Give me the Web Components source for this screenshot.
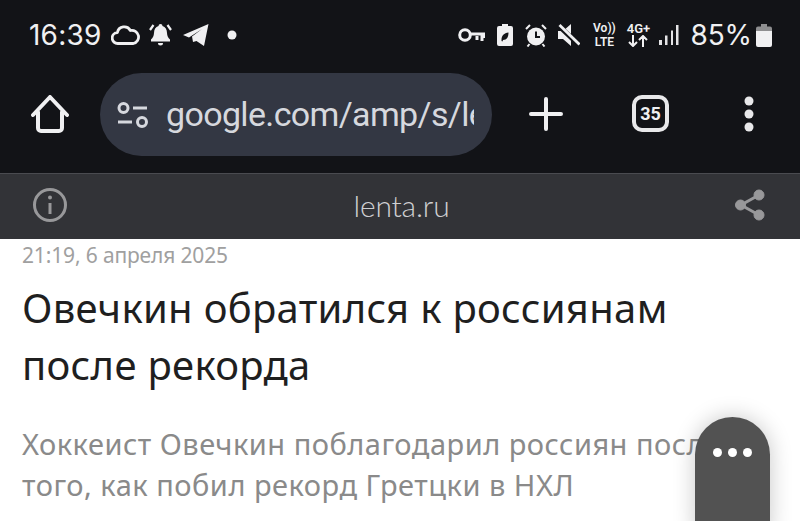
<!DOCTYPE html>
<html lang="ru">
<head>
<meta charset="utf-8">
<title>lenta.ru</title>
<style>
  html, body { margin: 0; height: 521px; overflow: hidden; background: #fff; }
</style>
</head>
<body>
<phone-page>
  <status-bar time="16:39" battery="85%"></status-bar>
  <browser-toolbar url="google.com/amp/s/lenta.ru" tabs="35"></browser-toolbar>
  <site-bar host="lenta.ru"></site-bar>
  <news-article date="21:19, 6 апреля 2025">
    <span slot="title">Овечкин обратился к россиянам после рекорда</span>
    <span slot="lead">Хоккеист Овечкин поблагодарил россиян после того, как побил рекорд Гретцки в НХЛ</span>
  </news-article>
  <more-button></more-button>
</phone-page>

<script>
class PhonePage extends HTMLElement {
  constructor() {
    super();
    this.attachShadow({ mode: "open" });
    this.shadowRoot.innerHTML = `
    <style>
      :host {
        display: flex;
        flex-direction: column;
        position: relative;
        width: 800px;
        height: 521px;
        overflow: hidden;
      }
    </style>
    <slot></slot>
  `;
  }
}

class StatusBar extends HTMLElement {
  constructor() {
    super();
    this.attachShadow({ mode: "open" });
  }

  connectedCallback() {
    const time = this.getAttribute("time");
    const battery = this.getAttribute("battery");
    this.shadowRoot.innerHTML = `
    <style>
      :host {
        display: flex;
        align-items: center;
        box-sizing: border-box;
        height: 70px;
        padding: 0 28px 0 29px;
        background: #121317;
        color: #f0f0f2;
        font: 28px Inter, Roboto, sans-serif;
      }
      .left, .right { display: flex; align-items: center; }
      .left { gap: 9px; }
      .right { margin-left: auto; gap: 12px; }
      svg { display: block; flex: none; }
      .time { letter-spacing: 0.2px; margin-right: 1px; }
      .pct { letter-spacing: -0.1px; margin: 0 -8px 0 -1px; }
      .net {
        display: flex;
        flex-direction: column;
        align-items: center;
        font: 600 12px/14px Roboto, sans-serif;
        width: 24px;
      }
      .net.data { font-size: 13px; line-height: 12px; }
      .net + .net { margin-left: -2px; }
      .net + svg { margin-left: -3px; }
    </style>
    <div class="left">
      <span class="time">${time}</span>
      <svg width="29" height="22" viewBox="0 0 29 22" fill="none" stroke="#f0f0f2" stroke-width="2.8" stroke-linejoin="round"><path d="M7 19.500a5.500 5.500 0 0 1-.6-11 7 7 0 0 1 13-2 6.500 6.500 0 0 1 3 13z"/></svg>
      <svg width="25" height="24" viewBox="0 0 25 24" fill="#f0f0f2" style="margin-left:-1px"><path d="M12.500 1a2 2 0 0 1 2 2c3 1 4.400 3.500 4.500 7 .1 3 1.200 5 3 6.500v2H3v-2c1.800-1.500 2.900-3.500 3-6.500.1-3.500 1.500-6 4.500-7a2 2 0 0 1 2-2zM10 20h5a2.500 2.500 0 0 1-5 0z"/><path d="M5.500 2 2 7M19.500 2 23 7" stroke="#f0f0f2" stroke-width="2.200" fill="none"/></svg>
      <svg width="27" height="24" viewBox="0 0 27 24" fill="#f0f0f2"><path d="M1 12 26.500 1 22 23l-7.500-5-3.500 1-1-5.500L20 6 7 14.500z"/></svg>
      <svg width="10" height="10" viewBox="0 0 10 10" fill="#f0f0f2" style="margin-left:9px"><circle cx="5" cy="5" r="4.500"/></svg>
    </div>
    <div class="right">
      <svg width="27" height="15" viewBox="0 0 27 15" fill="none" stroke="#f0f0f2" stroke-width="3"><circle cx="7" cy="7" r="5.300"/><path d="M12 6h15v2.500h-3v4.500M19 8v4" /></svg>
      <svg width="16" height="22" viewBox="0 0 16 22"><path fill="#f0f0f2" d="M5 0h6v2h3a2 2 0 0 1 2 2v16a2 2 0 0 1-2 2H2a2 2 0 0 1-2-2V4a2 2 0 0 1 2-2h3z"/><path fill="#121317" d="M4.500 16c0-4.500 2.500-7 7-7.500 0 4.500-1.500 7.500-5.500 7.500l-.5 1.500-1-.500z"/></svg>
      <svg width="22" height="23" viewBox="0 0 22 23"><circle cx="11" cy="12.500" r="9" fill="#f0f0f2"/><path d="M11 7.500v5.500h4" stroke="#121317" stroke-width="2" fill="none"/><path d="M1 5l4-4M21 5l-4-4M4.500 20l-2 2.500M17.500 20l2 2.500" stroke="#f0f0f2" stroke-width="2" fill="none"/></svg>
      <svg width="22" height="22" viewBox="0 0 22 22" style="margin-left:-1px"><path fill="#f0f0f2" d="M0 7h5l8-7v22l-8-7H0z"/><path d="M1 2l20 19" stroke="#121317" stroke-width="5"/><path d="M1.500 1l20 19.500" stroke="#f0f0f2" stroke-width="2.800"/></svg>
      <div class="net"><span>Vo))</span><span>LTE</span></div>
      <div class="net data"><span>4G+</span>
        <svg width="20" height="12" viewBox="0 0 20 12" fill="none" stroke="#f0f0f2" stroke-width="2"><path d="M5 0v11M1 7l4 4 4-4M15 12V1M11 5l4-4 4 4"/></svg>
      </div>
      <svg width="20" height="20" viewBox="0 0 20 20" fill="#e4e4e6"><rect x="0" y="15" width="3" height="5"/><rect x="6" y="10.500" width="2.500" height="9.500"/><rect x="12" y="5.500" width="2" height="14.500"/><rect x="17" y="0" width="2.500" height="20"/></svg>
      <span class="pct">${battery}</span>
      <svg width="16" height="23" viewBox="0 0 16 23"><path fill="#8e8e90" d="M5 0h6v3H5z"/><path fill="#8e8e90" d="M2 2.500h12a2 2 0 0 1 2 2V8H0V4.500a2 2 0 0 1 2-2z"/><path fill="#f0f0f2" d="M0 7h16v14a2 2 0 0 1-2 2H2a2 2 0 0 1-2-2z"/></svg>
    </div>
  `;
  }
}

class BrowserToolbar extends HTMLElement {
  constructor() {
    super();
    this.attachShadow({ mode: "open" });
  }

  connectedCallback() {
    const url = this.getAttribute("url");
    const tabs = this.getAttribute("tabs");
    this.shadowRoot.innerHTML = `
    <style>
      :host {
        display: flex;
        align-items: flex-start;
        box-sizing: border-box;
        height: 103px;
        padding: 3px 0 0 31px;
        background: #121317;
        color: #f0f0f2;
      }
      svg { display: block; flex: none; }
      .home { margin: 22px 31px 0 0; }
      .pill {
        display: flex;
        align-items: center;
        box-sizing: border-box;
        width: 392px;
        height: 83px;
        padding: 0 17px;
        border-radius: 42px;
        background: #333743;
        color: #d6d8de;
      }
      .url {
        margin: -2px 0 0 17px;
        width: 308px;
        overflow: hidden;
        white-space: nowrap;
        font: 34px Roboto, sans-serif;
        letter-spacing: -0.65px;
      }
      .actions { display: flex; align-items: center; margin-left: 37px; padding-top: 22px; }
      .tabs {
        display: flex;
        align-items: center;
        justify-content: center;
        box-sizing: border-box;
        width: 37px;
        height: 37px;
        margin-left: 69px;
        border: 4px solid #e8e8ea;
        border-radius: 10px;
        font: 700 18px Roboto, sans-serif;
      }
      .dots { margin-left: 75px; }
    </style>
    <svg class="home" width="38" height="38" viewBox="0 0 38 38" fill="none" stroke="#f0f0f2" stroke-width="4" stroke-linejoin="round" stroke-linecap="round"><path d="M2 20 19 2l17 18M7 17v16a3 3 0 0 0 3 3h18a3 3 0 0 0 3-3V17"/></svg>
    <div class="pill">
      <svg width="32" height="26" viewBox="0 0 32 26" fill="none" stroke="#d6d8de" stroke-width="3"><circle cx="6.500" cy="6" r="4.500"/><circle cx="25" cy="20" r="4.500"/><path d="M16 6h14M1 20h14"/></svg>
      <div class="url">${url}</div>
    </div>
    <div class="actions">
      <svg width="34" height="34" viewBox="0 0 34 34" stroke="#f0f0f2" stroke-width="4" stroke-linecap="round"><path d="M17 2v30M2 17h30"/></svg>
      <div class="tabs">${tabs}</div>
      <svg class="dots" width="10" height="36" viewBox="0 0 10 36" fill="#e8e8ea"><circle cx="5" cy="5" r="4.500"/><circle cx="5" cy="18" r="4.500"/><circle cx="5" cy="31" r="4.500"/></svg>
    </div>
  `;
  }
}

class SiteBar extends HTMLElement {
  constructor() {
    super();
    this.attachShadow({ mode: "open" });
  }

  connectedCallback() {
    this.shadowRoot.innerHTML = `
    <style>
      :host {
        display: flex;
        align-items: center;
        justify-content: space-between;
        box-sizing: border-box;
        height: 66px;
        padding: 0 35px 4px 32px;
        background: #323337;
        border-top: 1px solid #4a4b50;
        color: #cfcfd1;
      }
      svg { display: block; flex: none; }
      .host {
        font: 300 30px Lato, "Noto Sans", sans-serif;
        letter-spacing: -0.2px;
      }
    </style>
    <svg width="36" height="36" viewBox="0 0 36 36" fill="none" stroke="#98989a" stroke-width="3"><circle cx="18" cy="18" r="15.500"/><path d="M18 16v11" stroke-width="3"/><circle cx="18" cy="10.500" r="2" fill="#98989a" stroke="none"/></svg>
    <span class="host">${this.getAttribute("host")}</span>
    <svg width="30" height="32" viewBox="0 0 30 32" fill="#98989a" stroke="#98989a"><path d="M24 6 6 16l18 10" fill="none" stroke-width="3"/><circle cx="24" cy="6" r="5"/><circle cx="5.500" cy="16" r="5"/><circle cx="24" cy="26" r="5"/></svg>
  `;
  }
}

class NewsArticle extends HTMLElement {
  constructor() {
    super();
    this.attachShadow({ mode: "open" });
  }

  connectedCallback() {
    this.shadowRoot.innerHTML = `
    <style>
      :host {
        display: block;
        box-sizing: border-box;
        padding: 4px 0 0 22px;
        background: #fff;
        font-family: "Noto Sans", sans-serif;
      }
      .date { font-size: 21px; line-height: 24px; color: #a0a0a0; letter-spacing: -0.15px; }
      .title { margin-top: 12px; width: 700px; font-size: 40px; line-height: 57px; color: #1f1f1f; letter-spacing: 0.3px; }
      .lead { margin-top: 30px; width: 740px; font-size: 29px; line-height: 41px; color: #8a8a8a; letter-spacing: 0.5px; }
    </style>
    <div class="date">${this.getAttribute("date")}</div>
    <div class="title"><slot name="title"></slot></div>
    <div class="lead"><slot name="lead"></slot></div>
  `;
  }
}

class MoreButton extends HTMLElement {
  constructor() {
    super();
    this.attachShadow({ mode: "open" });
    this.shadowRoot.innerHTML = `
    <style>
      :host {
        display: flex;
        justify-content: center;
        gap: 6px;
        box-sizing: border-box;
        position: absolute;
        left: 695px;
        top: 417px;
        width: 75px;
        height: 140px;
        padding-top: 31px;
        border-radius: 37.5px;
        background: #525252;
        box-shadow: 0 0 22px rgba(0, 0, 0, 0.22);
      }
      i { width: 9px; height: 9px; border-radius: 50%; background: #fff; }
    </style>
    <i></i><i></i><i></i>
  `;
  }
}

customElements.define("phone-page", PhonePage);
customElements.define("status-bar", StatusBar);
customElements.define("browser-toolbar", BrowserToolbar);
customElements.define("site-bar", SiteBar);
customElements.define("news-article", NewsArticle);
customElements.define("more-button", MoreButton);
</script>
</body>
</html>
